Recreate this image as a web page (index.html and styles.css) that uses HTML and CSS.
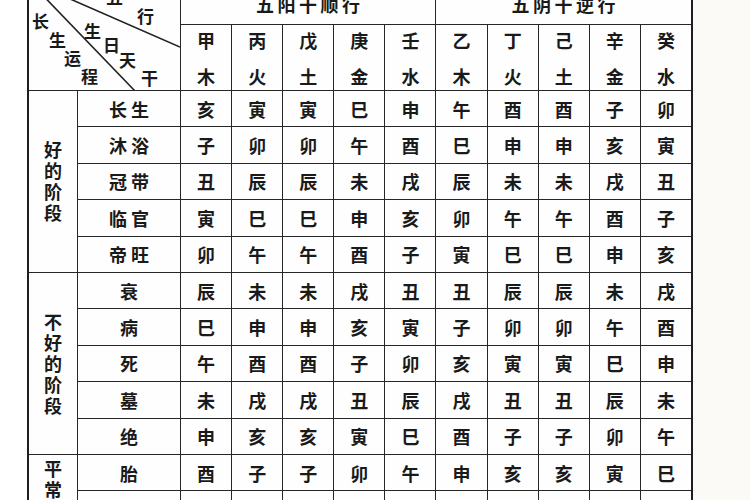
FILE: index.html
```html
<!DOCTYPE html>
<html lang="zh">
<head>
<meta charset="utf-8">
<link rel="stylesheet" href="styles.css">
</head>
<body>
<div class="sheet">
  <div class="table">
    <div class="corner">
      <svg class="diag" width="151" height="110" viewBox="0 0 151 110">
        <line x1="0" y1="0" x2="151" y2="66" />
        <line x1="0" y1="0" x2="106" y2="110" />
      </svg>
      <span class="ch c1">五</span>
      <span class="ch c2">行</span>
      <span class="ch c3">生</span>
      <span class="ch c4">日</span>
      <span class="ch c5">天</span>
      <span class="ch c6">干</span>
      <span class="ch c7">长</span>
      <span class="ch c8">生</span>
      <span class="ch c9">运</span>
      <span class="ch c10">程</span>
    </div>
    <div class="title">五阳干顺行</div>
    <div class="title">五阴干逆行</div>

    <div class="stem"><span>甲</span><span>木</span></div>
    <div class="stem"><span>丙</span><span>火</span></div>
    <div class="stem"><span>戊</span><span>土</span></div>
    <div class="stem"><span>庚</span><span>金</span></div>
    <div class="stem"><span>壬</span><span>水</span></div>
    <div class="stem"><span>乙</span><span>木</span></div>
    <div class="stem"><span>丁</span><span>火</span></div>
    <div class="stem"><span>己</span><span>土</span></div>
    <div class="stem"><span>辛</span><span>金</span></div>
    <div class="stem"><span>癸</span><span>水</span></div>

    <div class="group span5"><span class="vtext">好的阶段</span></div>
    <div class="stage">长生</div>
    <div class="v">亥</div><div class="v">寅</div><div class="v">寅</div><div class="v">巳</div><div class="v">申</div>
    <div class="v">午</div><div class="v">酉</div><div class="v">酉</div><div class="v">子</div><div class="v">卯</div>

    <div class="stage">沐浴</div>
    <div class="v">子</div><div class="v">卯</div><div class="v">卯</div><div class="v">午</div><div class="v">酉</div>
    <div class="v">巳</div><div class="v">申</div><div class="v">申</div><div class="v">亥</div><div class="v">寅</div>

    <div class="stage">冠带</div>
    <div class="v">丑</div><div class="v">辰</div><div class="v">辰</div><div class="v">未</div><div class="v">戌</div>
    <div class="v">辰</div><div class="v">未</div><div class="v">未</div><div class="v">戌</div><div class="v">丑</div>

    <div class="stage">临官</div>
    <div class="v">寅</div><div class="v">巳</div><div class="v">巳</div><div class="v">申</div><div class="v">亥</div>
    <div class="v">卯</div><div class="v">午</div><div class="v">午</div><div class="v">酉</div><div class="v">子</div>

    <div class="stage">帝旺</div>
    <div class="v">卯</div><div class="v">午</div><div class="v">午</div><div class="v">酉</div><div class="v">子</div>
    <div class="v">寅</div><div class="v">巳</div><div class="v">巳</div><div class="v">申</div><div class="v">亥</div>

    <div class="group span5"><span class="vtext">不好的阶段</span></div>
    <div class="stage">衰</div>
    <div class="v">辰</div><div class="v">未</div><div class="v">未</div><div class="v">戌</div><div class="v">丑</div>
    <div class="v">丑</div><div class="v">辰</div><div class="v">辰</div><div class="v">未</div><div class="v">戌</div>

    <div class="stage">病</div>
    <div class="v">巳</div><div class="v">申</div><div class="v">申</div><div class="v">亥</div><div class="v">寅</div>
    <div class="v">子</div><div class="v">卯</div><div class="v">卯</div><div class="v">午</div><div class="v">酉</div>

    <div class="stage">死</div>
    <div class="v">午</div><div class="v">酉</div><div class="v">酉</div><div class="v">子</div><div class="v">卯</div>
    <div class="v">亥</div><div class="v">寅</div><div class="v">寅</div><div class="v">巳</div><div class="v">申</div>

    <div class="stage">墓</div>
    <div class="v">未</div><div class="v">戌</div><div class="v">戌</div><div class="v">丑</div><div class="v">辰</div>
    <div class="v">戌</div><div class="v">丑</div><div class="v">丑</div><div class="v">辰</div><div class="v">未</div>

    <div class="stage">绝</div>
    <div class="v">申</div><div class="v">亥</div><div class="v">亥</div><div class="v">寅</div><div class="v">巳</div>
    <div class="v">酉</div><div class="v">子</div><div class="v">子</div><div class="v">卯</div><div class="v">午</div>

    <div class="group span2 top"><span class="vtext">平常</span></div>
    <div class="stage">胎</div>
    <div class="v">酉</div><div class="v">子</div><div class="v">子</div><div class="v">卯</div><div class="v">午</div>
    <div class="v">申</div><div class="v">亥</div><div class="v">亥</div><div class="v">寅</div><div class="v">巳</div>

    <div class="stage">养</div>
    <div class="v">戌</div><div class="v">丑</div><div class="v">丑</div><div class="v">辰</div><div class="v">未</div>
    <div class="v">未</div><div class="v">戌</div><div class="v">戌</div><div class="v">丑</div><div class="v">辰</div>
  </div>
</div>
</body>
</html>
```

FILE: styles.css
```css
html, body {
  margin: 0;
  padding: 0;
}

body {
  width: 750px;
  height: 500px;
  overflow: hidden;
  background: #fcfbf8;
  font-family: "Noto Sans CJK SC", "Noto Sans CJK TC", sans-serif;
  color: #1a1a1a;
}

.sheet {
  width: 750px;
  height: 500px;
  overflow: hidden;
  background: linear-gradient(to right, #ffffff 0, #ffffff 693px, #fbfaf6 693px);
}

.table {
  margin-top: -21px;
  margin-left: 27px;
  width: 662px;
  border: 2px solid #1e1e1e;
  background: #262626;
  display: grid;
  grid-template-columns: 48px 102px repeat(10, 1fr);
  grid-template-rows: 43px 65px repeat(12, 35.4px);
  gap: 1px;
}

.table > div {
  background: #fefefe;
  display: flex;
  align-items: center;
  justify-content: center;
  font-size: 18px;
  font-weight: 700;
  line-height: 1;
}

.table > .corner {
  grid-column: span 2;
  grid-row: span 2;
  position: relative;
  display: block;
}

.diag {
  position: absolute;
  left: 0;
  top: 0;
}

.diag line {
  stroke: #222;
  stroke-width: 1.6;
}

.ch {
  position: absolute;
  font-size: 17px;
  line-height: 17px;
}

.c1 { left: 77px; top: 7px; }
.c2 { left: 108px; top: 26px; }
.c3 { left: 55px; top: 41px; }
.c4 { left: 74px; top: 55px; }
.c5 { left: 90px; top: 70px; }
.c6 { left: 112px; top: 88px; }
.c7 { left: 3px; top: 31px; }
.c8 { left: 20px; top: 50px; }
.c9 { left: 35px; top: 68px; }
.c10 { left: 52px; top: 86px; }

.table > .title {
  grid-column: span 5;
  align-items: flex-end;
  padding-bottom: 11px;
  letter-spacing: 3.5px;
  padding-left: 3px;
}

.table > .stem {
  flex-direction: column;
  gap: 18px;
  padding-top: 1px;
}

.vtext {
  display: block;
  width: 18px;
  text-align: center;
  line-height: 21px;
}

.table > .span5 {
  grid-row: span 5;
}

.table > .span2 {
  grid-row: span 2;
}

.table > .group.top {
  align-items: flex-start;
  padding-top: 3px;
}

.table > .stage {
  letter-spacing: 4px;
  padding-left: 4px;
}
```
